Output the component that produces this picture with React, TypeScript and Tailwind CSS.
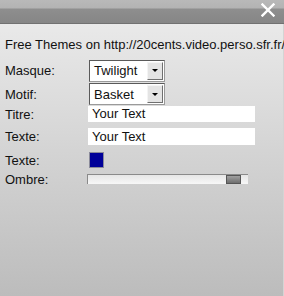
import React from 'react';

function Select({ value }: { value: string }) {
  return (
    <div className="flex h-[22px] w-[76px] items-center border border-t-[#5a5a5a] border-l-[#5a5a5a] border-b-[#9a9a9a] border-r-[#9a9a9a] bg-white">
      <span className="flex-1 pl-[4px] leading-[15px]">{value}</span>
      <div className="mr-[1px] flex h-[18px] w-[16px] items-center justify-center border border-t-[#f4f4f4] border-l-[#f4f4f4] border-b-[#707070] border-r-[#707070] bg-[#e4e4e4]">
        <div className="h-0 w-0 border-l-[3px] border-r-[3px] border-t-[3px] border-l-transparent border-r-transparent border-t-black" />
      </div>
    </div>
  );
}

function Row({ label, h, children }: { label: string; h: string; children: React.ReactNode }) {
  return (
    <div className={`flex items-center ${h}`}>
      <span className="w-[89px] shrink-0 pl-[5px] leading-[15px]">{label}</span>
      {children}
    </div>
  );
}

export default function App() {
  return (
    <div
      className="flex h-[296px] w-[284px] flex-col overflow-hidden text-[13px] text-[#111]"
      style={{ fontFamily: '"Liberation Sans", Arial, sans-serif' }}
    >
      {/* barre de titre */}
      <div className="relative h-[24px] shrink-0 border-b border-[#717171] bg-[linear-gradient(#b9b9b9_0px,#b3b3b3_8px,#8e8e8e_9px,#868686_23px)]">
        <svg className="absolute left-[261px] top-[3px]" width="14" height="14" viewBox="0 0 14 14">
          <path d="M1.5 1.5 L12.5 12.5 M12.5 1.5 L1.5 12.5" stroke="white" strokeWidth="2.4" strokeLinecap="square" />
        </svg>
      </div>

      <div className="flex flex-1 flex-col bg-[linear-gradient(#e9e9e9,#bcbcbc)] border-r border-[#d4d4d4]">
        <div className="mt-[13px] whitespace-nowrap pl-[5px] leading-[15px]">
          Free Themes on http://20cents.video.perso.sfr.fr/
        </div>

        <div className="mt-[7px]">
          <Row label="Masque:" h="h-[23px]">
            <Select value="Twilight" />
          </Row>
          <Row label="Motif:" h="h-[24px]">
            <Select value="Basket" />
          </Row>
          <Row label="Titre:" h="h-[16px]">
            <div className="ml-[-1px] flex h-[16px] w-[167px] items-center bg-white pl-[4px]">Your Text</div>
          </Row>
          <Row label="Texte:" h="h-[29px]">
            <div className="ml-[-1px] flex h-[17px] w-[167px] items-center bg-white pl-[4px]">Your Text</div>
          </Row>
          <Row label="Texte:" h="h-[18px]">
            <div className="h-[16px] w-[15px] border border-[#8a8a9a] bg-[#000099]" />
          </Row>
          <Row label="Ombre:" h="h-[20px]">
            <div className="ml-[-2px] flex h-[10px] w-[161px] border-t border-l border-[#8a8a8a] bg-[linear-gradient(#e6e6e6,#f7f7f7)]">
              <div className="w-[138px]" />
              <div className="h-full w-[15px] border border-[#555] bg-[linear-gradient(#a0a0a0,#6e6e6e)]" />
            </div>
          </Row>
        </div>
      </div>
    </div>
  );
}
